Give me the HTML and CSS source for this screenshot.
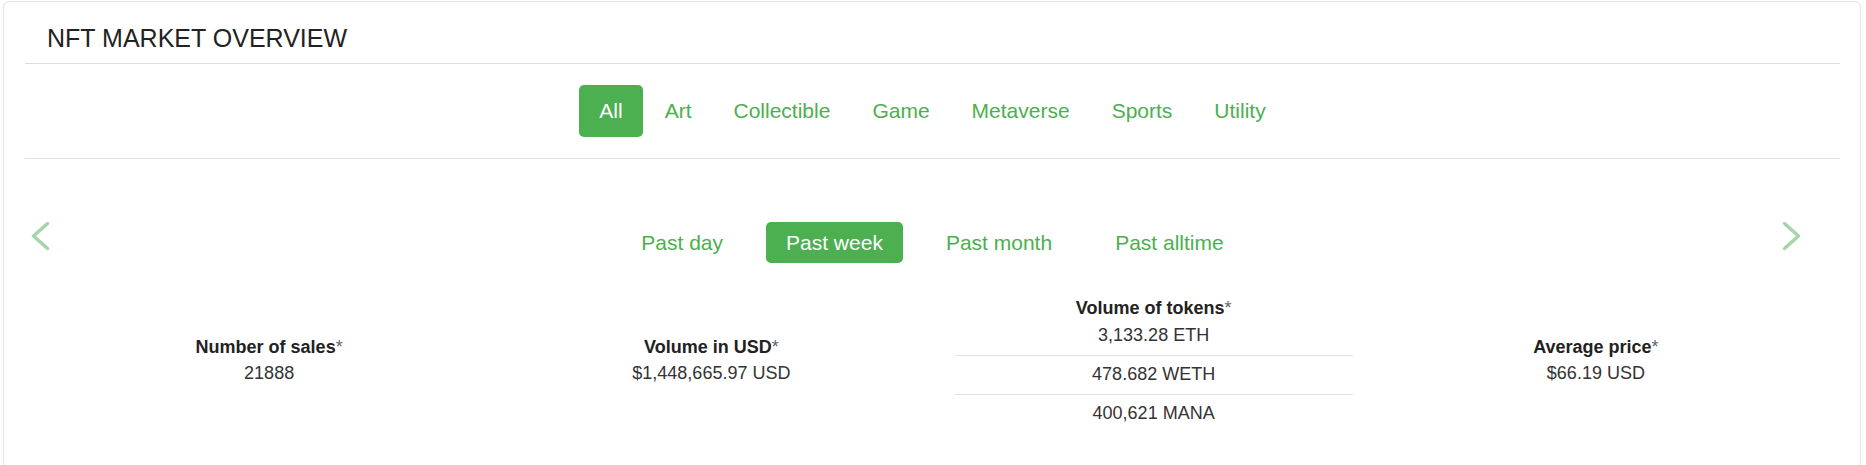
FILE: index.html
```html
<!DOCTYPE html>
<html lang="en">
<head>
<meta charset="utf-8">
<title>NFT Market Overview</title>
<link rel="stylesheet" href="styles.css">
</head>
<body>
<div class="card">
  <div class="card-header">
    <h1 class="title">NFT MARKET OVERVIEW</h1>
  </div>
  <nav class="categories">
    <a class="pill active">All</a>
    <a class="pill">Art</a>
    <a class="pill">Collectible</a>
    <a class="pill">Game</a>
    <a class="pill">Metaverse</a>
    <a class="pill">Sports</a>
    <a class="pill">Utility</a>
  </nav>
  <section class="carousel">
    <svg class="arrow arrow-left" width="20" height="30" viewBox="0 0 20 30"><path d="M16.5 2.5 L2.5 15 L16.5 27.5" fill="none" stroke="#a5d6a7" stroke-width="3.5" stroke-linecap="round" stroke-linejoin="round"/></svg>
    <svg class="arrow arrow-right" width="20" height="30" viewBox="0 0 20 30"><path d="M2.5 2.5 L16.5 15 L2.5 27.5" fill="none" stroke="#a5d6a7" stroke-width="3.5" stroke-linecap="round" stroke-linejoin="round"/></svg>
    <nav class="periods">
      <a class="period">Past day</a>
      <a class="period active">Past week</a>
      <a class="period">Past month</a>
      <a class="period">Past alltime</a>
    </nav>
    <div class="stats">
      <div class="stat">
        <div class="label">Number of sales<span class="ast">*</span></div>
        <div class="value">21888</div>
      </div>
      <div class="stat">
        <div class="label">Volume in USD<span class="ast">*</span></div>
        <div class="value">$1,448,665.97 USD</div>
      </div>
      <div class="stat">
        <div class="label">Volume of tokens<span class="ast">*</span></div>
        <div class="token-list">
          <div class="token-row">3,133.28 ETH</div>
          <div class="token-row">478.682 WETH</div>
          <div class="token-row">400,621 MANA</div>
        </div>
      </div>
      <div class="stat">
        <div class="label">Average price<span class="ast">*</span></div>
        <div class="value">$66.19 USD</div>
      </div>
    </div>
  </section>
</div>
</body>
</html>
```
FILE: styles.css
```css
html, body {
  margin: 0;
  padding: 0;
  background: #ffffff;
}

body {
  font-family: "Liberation Sans", Arial, Helvetica, sans-serif;
  color: #333333;
  overflow: hidden;
}

.card {
  margin: 1px 5px 0 3px;
  border: 1px solid #e4e4e4;
  border-radius: 6px;
  box-shadow: 0 1px 2px rgba(0, 0, 0, 0.06);
  padding: 0 20px 60px 21px;
  background: #ffffff;
}

.card-header {
  padding: 21px 0 10px 22px;
  border-bottom: 1px solid #dddddd;
}

.title {
  margin: 0;
  font-size: 25px;
  line-height: 30px;
  font-weight: normal;
  color: #222222;
}

.categories {
  display: flex;
  justify-content: center;
  gap: 2px;
  padding: 21px 0;
  border-bottom: 1px solid #e2e2e2;
}

.pill,
.period {
  display: block;
  font-size: 21px;
  line-height: 24px;
  color: #4caf50;
  border-radius: 5px;
  cursor: pointer;
}

.pill {
  padding: 14px 20px;
}

.pill.active,
.period.active {
  background: #4caf50;
  color: #ffffff;
}

.carousel {
  position: relative;
  padding-top: 63px;
}

.arrow {
  position: absolute;
  top: 62px;
}

.arrow-left {
  left: 6px;
}

.arrow-right {
  right: 38px;
}

.periods {
  display: flex;
  justify-content: center;
  gap: 23px;
}

.period {
  padding: 8.5px 20px;
}

.stats {
  display: grid;
  grid-template-columns: repeat(4, 1fr);
  align-items: center;
  padding: 0 23px;
  margin-top: 31.5px;
}

.stat {
  padding: 0 22px;
  text-align: center;
  font-size: 18px;
  line-height: 26px;
}

.label {
  font-weight: bold;
  color: #222222;
}

.ast {
  font-weight: normal;
  color: #666666;
}

.value {
  color: #333333;
}

.token-row {
  padding: 5px 0 7px;
  border-top: 1px solid #e2e2e2;
  color: #333333;
}

.token-row:first-child {
  border-top: none;
  padding-top: 1px;
}

.token-row:last-child {
  padding-bottom: 0;
}
```
